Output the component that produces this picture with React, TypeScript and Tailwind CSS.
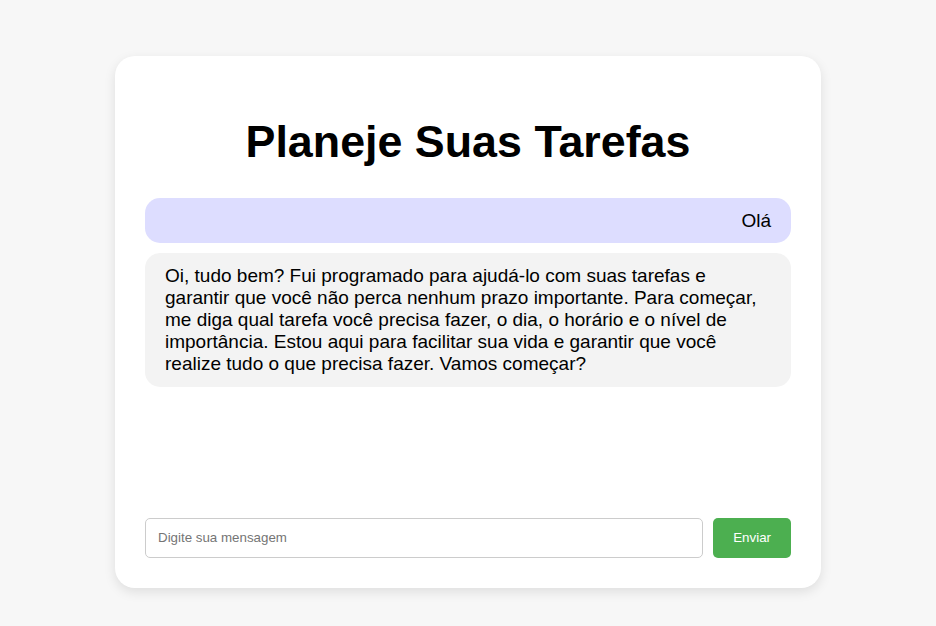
import React from "react";

export default function App() {
  return (
    <div
      className="min-h-[626px] w-full bg-[#f7f7f7] pt-[56px]"
      style={{ fontFamily: '"Liberation Sans", Arial, sans-serif' }}
    >
      <div className="mx-auto flex w-[706px] flex-col rounded-[20px] bg-white p-[30px] shadow-[0_4px_12px_rgba(0,0,0,0.1)]">
        <h1 className="my-[30px] text-center text-[44.8px] font-bold leading-[1.15] text-black">
          Planeje Suas Tarefas
        </h1>
        <div className="flex h-[300px] flex-col gap-[10px]">
          <div className="rounded-[15px] bg-[#ddddff] px-5 py-3 text-right text-[19px] leading-[1.15] text-black">
            Olá
          </div>
          <div className="rounded-[15px] bg-[#f3f3f3] px-5 py-3 text-[19px] leading-[1.15] text-black">
            Oi, tudo bem? Fui programado para ajudá-lo com suas tarefas e garantir que você não perca nenhum prazo importante. Para começar, me diga qual tarefa você precisa fazer, o dia, o horário e o nível de importância. Estou aqui para facilitar sua vida e garantir que você realize tudo o que precisa fazer. Vamos começar?
          </div>
        </div>
        <div className="mt-5 flex gap-[10px]">
          <input
            type="text"
            placeholder="Digite sua mensagem"
            className="h-10 flex-1 rounded-[5px] border border-[#cccccc] px-3 text-[13.33px] text-black outline-none placeholder:text-[#757575]"
          />
          <button className="h-10 rounded-[5px] bg-[#4caf50] px-5 text-[13.33px] text-white">
            Enviar
          </button>
        </div>
      </div>
    </div>
  );
}
